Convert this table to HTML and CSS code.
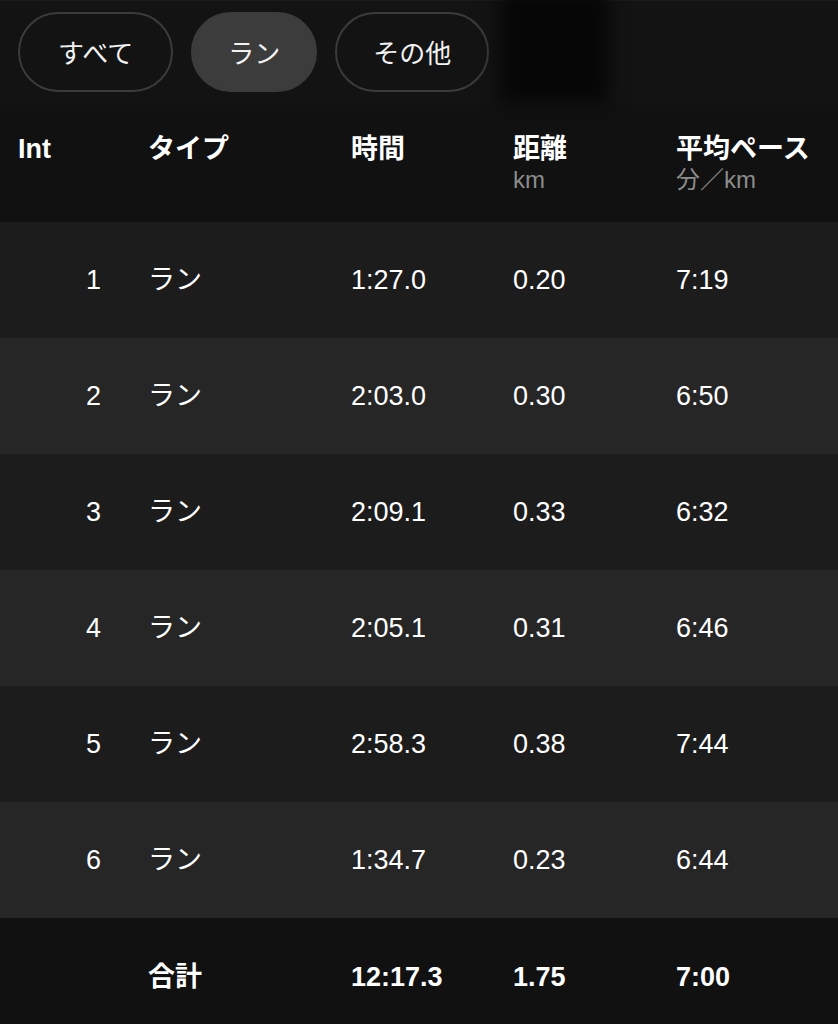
FILE: index.html
```html
<!DOCTYPE html>
<html lang="ja">
<head>
<meta charset="utf-8">
<title>インターバル</title>
<link rel="stylesheet" href="styles.css">
</head>
<body>
<div class="page">
  <div class="filters">
    <button class="chip">すべて</button>
    <button class="chip chip-active">ラン</button>
    <button class="chip chip-narrow">その他</button>
    <div class="smudge"></div>
  </div>

  <div class="table">
    <div class="row head">
      <div class="c c-int">Int</div>
      <div class="c">タイプ</div>
      <div class="c">時間</div>
      <div class="c">距離<span class="unit">km</span></div>
      <div class="c">平均ペース<span class="unit">分／km</span></div>
    </div>

    <div class="row odd">
      <div class="c c-int num">1</div><div class="c">ラン</div><div class="c">1:27.0</div><div class="c">0.20</div><div class="c">7:19</div>
    </div>
    <div class="row even">
      <div class="c c-int num">2</div><div class="c">ラン</div><div class="c">2:03.0</div><div class="c">0.30</div><div class="c">6:50</div>
    </div>
    <div class="row odd">
      <div class="c c-int num">3</div><div class="c">ラン</div><div class="c">2:09.1</div><div class="c">0.33</div><div class="c">6:32</div>
    </div>
    <div class="row even">
      <div class="c c-int num">4</div><div class="c">ラン</div><div class="c">2:05.1</div><div class="c">0.31</div><div class="c">6:46</div>
    </div>
    <div class="row odd">
      <div class="c c-int num">5</div><div class="c">ラン</div><div class="c">2:58.3</div><div class="c">0.38</div><div class="c">7:44</div>
    </div>
    <div class="row even">
      <div class="c c-int num">6</div><div class="c">ラン</div><div class="c">1:34.7</div><div class="c">0.23</div><div class="c">6:44</div>
    </div>

    <div class="row total">
      <div class="c c-int"></div><div class="c">合計</div><div class="c">12:17.3</div><div class="c">1.75</div><div class="c">7:00</div>
    </div>
  </div>
</div>
</body>
</html>
```

FILE: styles.css
```css
* { box-sizing: border-box; }

html, body {
  margin: 0;
  padding: 0;
  background: #111111;
}

body {
  font-family: "Liberation Sans", "Noto Sans CJK JP", sans-serif;
  color: #ffffff;
  width: 838px;
  height: 1024px;
  overflow: hidden;
}

.page {
  display: flex;
  flex-direction: column;
}

.filters {
  position: relative;
  display: flex;
  gap: 18px;
  align-items: flex-start;
  height: 105px;
  padding: 11px 0 0 18px;
  background: #131313;
  border-top: 1px solid #1b1b1b;
}

.chip {
  height: 80px;
  border-radius: 40px;
  border: 2px solid #3b3b3b;
  background: transparent;
  color: #f2f2f2;
  font-family: "Noto Sans CJK JP", sans-serif;
  font-size: 26px;
  padding: 0 38px;
  margin: 0;
  line-height: 1;
}

.chip-active {
  background: #3c3c3c;
  border-color: #3c3c3c;
  padding: 0 35px;
}

.chip-narrow {
  padding: 0 36px;
}

.smudge {
  position: absolute;
  left: 500px;
  top: -10px;
  width: 108px;
  height: 112px;
  background: #060606;
  filter: blur(9px);
}

.table {
  display: flex;
  flex-direction: column;
}

.row {
  display: grid;
  grid-template-columns: 130px 203px 162px 163px 1fr;
  padding-left: 18px;
  align-items: center;
  height: 116px;
  font-size: 27px;
}

.head {
  align-items: start;
  height: 117px;
  padding-top: 28px;
  background: #111111;
  font-weight: bold;
}

.c {
  display: flex;
  flex-direction: column;
  line-height: 32px;
  white-space: nowrap;
}

.c-int.num {
  text-align: right;
  padding-right: 47px;
}

.unit {
  font-weight: normal;
  font-size: 24px;
  color: #8c8c8c;
  line-height: 30px;
}

.odd { background: #1c1c1c; }
.even { background: #262626; }

.total {
  height: 118px;
  background: #111111;
  font-weight: bold;
}
```
